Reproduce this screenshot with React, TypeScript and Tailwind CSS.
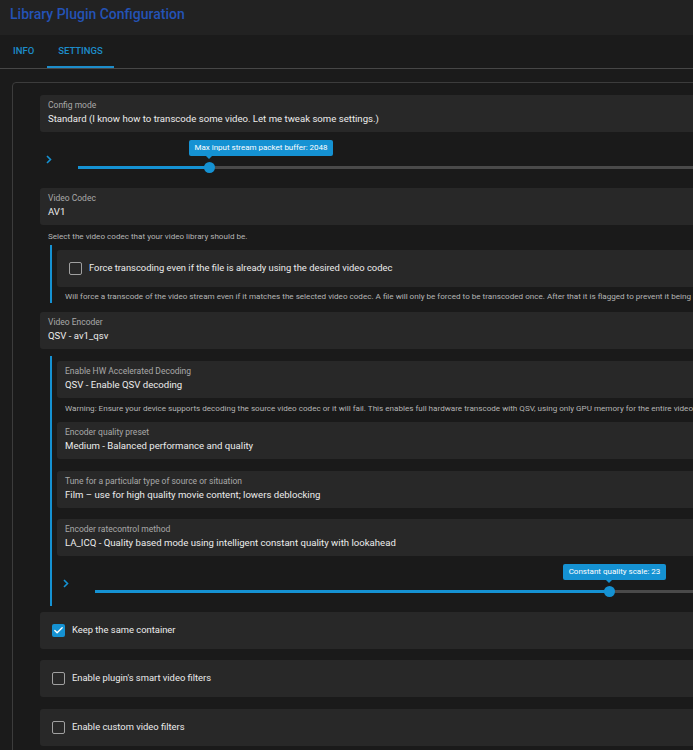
import { Check } from "lucide-react";

const blue = "bg-[#1592d3]";

const Chevron = () => (
  <svg width="6" height="9" viewBox="0 0 6 9" fill="none">
    <path d="M1 1l3.5 3.5L1 8" stroke="#1592d3" strokeWidth="1.6" />
  </svg>
);

const Field = ({ label, value }: { label: string; value: string }) => (
  <div className="bg-[#282828] rounded-[3px] px-2 pt-[5px] pb-[7px]">
    <div className="text-[8.5px] leading-[11px] text-[#a9a9a9]">{label}</div>
    <div className="mt-[2px] text-[9.6px] leading-[12px] text-[#ececec]">{value}</div>
  </div>
);

const Toggle = ({ label, checked }: { label: string; checked?: boolean }) => (
  <div className="bg-[#282828] rounded-[3px] h-[37px] pl-3 flex items-center gap-[7px]">
    {checked ? (
      <div className={`w-[13px] h-[13px] rounded-[2px] ${blue} flex items-center justify-center`}>
        <Check size={11} strokeWidth={3} color="#fff" />
      </div>
    ) : (
      <div className="w-[13px] h-[13px] rounded-[2px] border-[1.5px] border-[#a0a0a0]" />
    )}
    <span className="text-[9.4px] text-[#ececec]">{label}</span>
  </div>
);

const Help = ({ children }: { children: string }) => (
  <div className="px-2 text-[8.1px] leading-[11px] text-[#b5b5b5] whitespace-nowrap">{children}</div>
);

const Slider = ({
  text,
  fill,
  height,
  tipLeft,
  tipWidth,
  arrowLeft,
}: {
  text: string;
  fill: string;
  height: string;
  tipLeft: string;
  tipWidth: string;
  arrowLeft: string;
}) => (
  <div className={`flex ${height} pt-[8px]`}>
    <div className="w-[38px] pl-[6px] pt-[15px]">
      <Chevron />
    </div>
    <div className="relative flex-1 pt-[22px]">
      <div className={`absolute top-0 ${tipLeft} ${tipWidth} h-[16px] rounded-[2px] ${blue} flex items-center justify-center text-[8px] text-white whitespace-nowrap`}>
        {text}
        <div className={`absolute -bottom-[3px] ${arrowLeft} w-0 h-0 border-l-[3px] border-r-[3px] border-t-[3px] border-l-transparent border-r-transparent border-t-[#1592d3]`} />
      </div>
      <div className="flex items-center h-[11px]">
        <div className={`h-[3px] ${fill} ${blue}`} />
        <div className={`w-[11px] h-[11px] -mx-[5px] rounded-full ${blue} relative z-10 shrink-0`} />
        <div className="h-[3px] flex-1 bg-[#4a4a4a]" />
      </div>
    </div>
  </div>
);

export default function App() {
  return (
    <div className="w-[693px] h-[750px] overflow-hidden bg-[#1b1b1b] font-['Roboto',sans-serif]">
      <div className="h-[35px] bg-[#222222] px-[10px] pb-[6px] flex items-center">
        <h1 className="text-[14px] font-medium text-[#2453b6]">Library Plugin Configuration</h1>
      </div>
      <div className="h-[34px] flex border-b border-[#474747]">
        <div className="px-[13px] flex items-center text-[9.5px] font-medium text-[#1d8dca]">INFO</div>
        <div className="px-[11px] flex items-center text-[9.5px] font-medium text-[#1d8dca] border-b-2 border-[#1d8dca] pt-[2px]">
          SETTINGS
        </div>
      </div>

      <div className="pt-[13px] pl-[12px]">
        <div className="w-[1100px] h-[700px] border border-[#3c3c3c] rounded-tl-[4px] bg-[#1a1a1a] pl-[27px] pt-[12px]">
          <div className="flex flex-col">
            <Field label="Config mode" value="Standard (I know how to transcode some video. Let me tweak some settings.)" />
            <Slider
              text="Max input stream packet buffer: 2048"
              fill="w-[131px]"
              height="h-[56px]"
              tipLeft="left-[111px]"
              tipWidth="w-[144px]"
              arrowLeft="left-[17px]"
            />
            <Field label="Video Codec" value="AV1" />
            <div className="mt-[6px]">
              <Help>Select the video codec that your video library should be.</Help>
            </div>

            <div className="mt-[3px] ml-[10px] border-l-2 border-[#1592d3] pl-[5px] pt-[5px] pb-[1px]">
              <Toggle label="Force transcoding even if the file is already using the desired video codec" />
              <div className="mt-[4px]">
                <Help>
                  Will force a transcode of the video stream even if it matches the selected video codec. A file will only be forced to be transcoded once. After that it is flagged to prevent it being added again.
                </Help>
              </div>
            </div>

            <div className="mt-[9px]">
              <Field label="Video Encoder" value="QSV - av1_qsv" />
            </div>

            <div className="mt-[7px] ml-[10px] border-l-2 border-[#1592d3] pl-[5px] pt-[5px]">
              <Field label="Enable HW Accelerated Decoding" value="QSV - Enable QSV decoding" />
              <div className="mt-[5px]">
                <Help>
                  Warning: Ensure your device supports decoding the source video codec or it will fail. This enables full hardware transcode with QSV, using only GPU memory for the entire video transcode.
                </Help>
              </div>
              <div className="mt-[8px]">
                <Field label="Encoder quality preset" value="Medium - Balanced performance and quality" />
              </div>
              <div className="mt-[12px]">
                <Field label="Tune for a particular type of source or situation" value="Film – use for high quality movie content; lowers deblocking" />
              </div>
              <div className="mt-[11px]">
                <Field label="Encoder ratecontrol method" value="LA_ICQ - Quality based mode using intelligent constant quality with lookahead" />
              </div>
              <Slider
                text="Constant quality scale: 23"
                fill="w-[514px]"
                height="h-[50px]"
                tipLeft="left-[468px]"
                tipWidth="w-[103px]"
                arrowLeft="left-[43px]"
              />
            </div>

            <div className="mt-[6px]">
              <Toggle label="Keep the same container" checked />
            </div>
            <div className="mt-[11px]">
              <Toggle label="Enable plugin's smart video filters" />
            </div>
            <div className="mt-[12px]">
              <Toggle label="Enable custom video filters" />
            </div>
          </div>
        </div>
      </div>
    </div>
  );
}
